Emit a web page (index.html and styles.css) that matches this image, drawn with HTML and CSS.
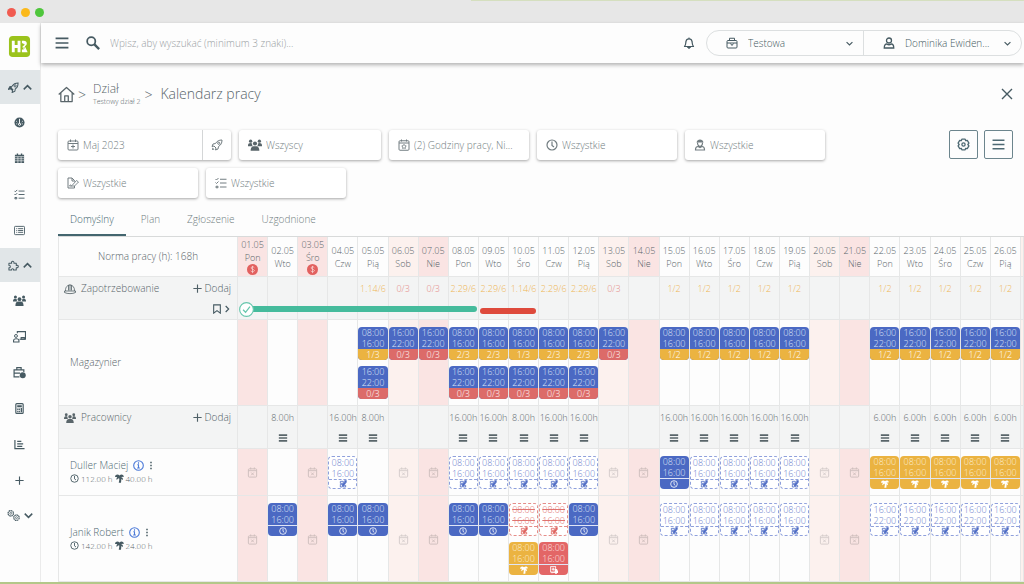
FILE: index.html
```html
<!DOCTYPE html>
<html lang="pl">
<head>
<meta charset="utf-8">
<meta name="viewport" content="width=device-width, initial-scale=1">
<title>Kalendarz pracy</title>
<link rel="stylesheet" href="styles.css">
</head>
<body>
<svg class="sprite" aria-hidden="true">
  <symbol id="i-rocket" viewBox="0 0 24 24"><path d="M22 2c-6 0-10 2-13 7l-5 1-2 5 4-1 4 4-1 4 5-2 1-5c5-3 7-7 7-13z" fill="none" stroke="currentColor" stroke-width="2" stroke-linejoin="round"/><circle cx="15.500" cy="8.500" r="2.200" fill="none" stroke="currentColor" stroke-width="2"/><path d="M3 17l4 4-5 1z" fill="currentColor"/></symbol>
  <symbol id="i-rocket-solid" viewBox="0 0 24 24"><path d="M22 2c-6 0-10 2-13 7l-5 1-3 6 5-1 4 4-1 4 6-3 1-5c5-3 6-7 6-13z" fill="none" stroke="currentColor" stroke-width="2.200"/><path d="M9 9l-5 1-3 6 5-1 4 4 2-3-4-3z" fill="currentColor"/><circle cx="15.500" cy="8.500" r="2.400" fill="none" stroke="currentColor" stroke-width="2"/></symbol>
  <symbol id="i-gauge" viewBox="0 0 24 24"><circle cx="12" cy="12" r="11" fill="currentColor"/><path d="M12 4v11M5 9l2 2M19 9l-2 2M5 15h2M17 15h2" stroke="#fff" stroke-width="2"/><circle cx="12" cy="16" r="3" fill="#fff"/><circle cx="12" cy="16" r="1.300" fill="currentColor"/></symbol>
  <symbol id="i-calendar-grid" viewBox="0 0 24 24"><path d="M2 4h20v18H2zM6 1h3v4H6zM15 1h3v4h-3z" fill="currentColor"/><path d="M2 8h20M2 12.500h20M2 17h20M8.500 8v14M15.500 8v14" stroke="#fff" stroke-width="1.300"/></symbol>
  <symbol id="i-checklist" viewBox="0 0 24 24"><path d="M1 4l2 2 4-4M1 11l2 2 4-4M2 18.500h4v3H2zM10 4.500h13M10 12h13M10 20h13" fill="none" stroke="currentColor" stroke-width="2"/></symbol>
  <symbol id="i-list-card" viewBox="0 0 24 24"><rect x="1" y="3" width="22" height="18" rx="2" fill="none" stroke="currentColor" stroke-width="2"/><path d="M5 8h2M9 8h11M5 12h2M9 12h11M5 16h2M9 16h11" stroke="currentColor" stroke-width="2"/></symbol>
  <symbol id="i-puzzle" viewBox="0 0 24 24"><path d="M2 7h6c-2-5 6-6 5 0h5v5c6-2 6 6 0 5v5h-6c1-4-5-4-4 0H2v-5c4 1 4-6 0-5z" fill="none" stroke="currentColor" stroke-width="2.200" stroke-linejoin="round"/></symbol>
  <symbol id="i-group" viewBox="0 0 24 24"><circle cx="4.500" cy="5.500" r="2.800" fill="currentColor"/><circle cx="19.500" cy="5.500" r="2.800" fill="currentColor"/><circle cx="12" cy="9.500" r="3.500" fill="currentColor"/><path d="M0 13c0-5 5-5 7-3.500 0 2 0 3 1 4.500H0zM24 13c0-5-5-5-7-3.500 0 2 0 3-1 4.500h8zM4.500 22c0-8 4-8 7.500-8s7.500 0 7.500 8z" fill="currentColor"/></symbol>
  <symbol id="i-teacher" viewBox="0 0 24 24"><path d="M8 6V3h15v14H12" fill="none" stroke="currentColor" stroke-width="2"/><circle cx="5.500" cy="11" r="2.700" fill="none" stroke="currentColor" stroke-width="1.800"/><path d="M1 22v-2c0-5 10-5 10 0v2zM15 17h6v-3h-6z" fill="none" stroke="currentColor" stroke-width="2"/></symbol>
  <symbol id="i-case-clock" viewBox="0 0 24 24"><path d="M12 20H2V7h18v4M7 7V3h8v4M2 13h11" fill="none" stroke="currentColor" stroke-width="2.200"/><circle cx="18" cy="17" r="5.500" fill="currentColor"/></symbol>
  <symbol id="i-calculator" viewBox="0 0 24 24"><rect x="4" y="1.500" width="16" height="21" rx="2" fill="none" stroke="currentColor" stroke-width="2.600"/><path d="M7 5h10v4H7zM7 12h3v3H7zM7 17h3v3H7zM11 12h2v3h-2zM11 17h2v3h-2zM14.500 11h3v9h-3z" fill="currentColor"/></symbol>
  <symbol id="i-chart" viewBox="0 0 24 24"><path d="M2 2v19h21M7 5h9M7 10.500h13M7 16h11" fill="none" stroke="currentColor" stroke-width="2.600"/></symbol>
  <symbol id="i-plus" viewBox="0 0 24 24"><path d="M12 1v22M1 12h22" stroke="currentColor" stroke-width="3"/></symbol>
  <symbol id="i-cogs" viewBox="0 0 24 24"><circle cx="7" cy="8" r="5" fill="none" stroke="currentColor" stroke-width="2.200" stroke-dasharray="3 .8"/><circle cx="7" cy="8" r="1.800" fill="none" stroke="currentColor" stroke-width="1.300"/><circle cx="17.500" cy="16" r="5" fill="none" stroke="currentColor" stroke-width="2.200" stroke-dasharray="3 .8"/><circle cx="17.500" cy="16" r="1.800" fill="none" stroke="currentColor" stroke-width="1.300"/></symbol>
  <symbol id="i-up" viewBox="0 0 24 24"><path d="M2 17l10-10 10 10" fill="none" stroke="currentColor" stroke-width="4"/></symbol>
  <symbol id="i-down" viewBox="0 0 24 24"><path d="M2 7l10 10L22 7" fill="none" stroke="currentColor" stroke-width="4"/></symbol>
  <symbol id="i-right" viewBox="0 0 24 24"><path d="M8 3l9 9-9 9" fill="none" stroke="currentColor" stroke-width="3.500"/></symbol>
  <symbol id="i-burger" viewBox="0 0 24 24"><path d="M1 4h22M1 12h22M1 20h22" stroke="currentColor" stroke-width="2.800"/></symbol>
  <symbol id="i-menu-bold" viewBox="0 0 24 24"><path d="M2 5h20M2 12h20M2 19h20" stroke="currentColor" stroke-width="4"/></symbol>
  <symbol id="i-search" viewBox="0 0 24 24"><circle cx="9" cy="9" r="7" fill="none" stroke="currentColor" stroke-width="3"/><path d="M14 14l8.500 8.500" stroke="currentColor" stroke-width="4"/></symbol>
  <symbol id="i-bell" viewBox="0 0 24 24"><path d="M3 19c3-3 2-6 3-10 1-7 11-7 12 0 1 4 0 7 3 10z" fill="none" stroke="currentColor" stroke-width="2.400" stroke-linejoin="round"/><path d="M12 1v3M9 21c1 2 5 2 6 0z" stroke="currentColor" stroke-width="2" fill="currentColor"/></symbol>
  <symbol id="i-briefcase" viewBox="0 0 24 24"><rect x="2" y="7" width="20" height="15" rx="2" fill="none" stroke="currentColor" stroke-width="2"/><path d="M7 7V2.500h10V7M2 12h20M9 13l3 4 3-4" fill="none" stroke="currentColor" stroke-width="2"/></symbol>
  <symbol id="i-user" viewBox="0 0 24 24"><circle cx="12" cy="7" r="5" fill="none" stroke="currentColor" stroke-width="2.600"/><path d="M2.500 22c0-7 3-8 5-8 3 2 6 2 9 0 2 0 5 1 5 8z" fill="none" stroke="currentColor" stroke-width="2.600"/></symbol>
  <symbol id="i-worker" viewBox="0 0 24 24"><path d="M5 7c1-8 13-8 14 0z" fill="currentColor"/><path d="M7 7c0 10 10 10 10 0M3 22c0-6 3-7 5-7l4 2 4-2c2 0 5 1 5 7z" fill="none" stroke="currentColor" stroke-width="2.400"/></symbol>
  <symbol id="i-home" viewBox="0 0 24 24"><path d="M1 12L12 2l11 10M4 10v12h16V10M9.500 22v-8h5v8" fill="none" stroke="currentColor" stroke-width="1.800" stroke-linejoin="round"/></symbol>
  <symbol id="i-close" viewBox="0 0 24 24"><path d="M2 2l20 20M22 2L2 22" stroke="currentColor" stroke-width="2.800"/></symbol>
  <symbol id="i-cal-plus" viewBox="0 0 24 24"><rect x="2" y="4" width="20" height="18" rx="2" fill="none" stroke="currentColor" stroke-width="2"/><path d="M2 9h20M7 1v5M17 1v5M12 11v8M8 15h8" stroke="currentColor" stroke-width="2"/></symbol>
  <symbol id="i-cal-star" viewBox="0 0 24 24"><rect x="2" y="3.500" width="20" height="19" rx="2" fill="none" stroke="currentColor" stroke-width="2"/><path d="M2 8h20M7 1v4M17 1v4" stroke="currentColor" stroke-width="2"/><path d="M12 10.500l1.500 2.700 3 .6-2 2.200.3 3-2.800-1.200L9.200 19l.3-3-2-2.200 3-.6z" fill="none" stroke="currentColor" stroke-width="1.600"/></symbol>
  <symbol id="i-cal-x" viewBox="0 0 24 24"><rect x="3" y="4" width="18" height="18" rx="2" fill="none" stroke="currentColor" stroke-width="2"/><path d="M3 8h18M8 1v4M16 1v4M9 12l6 6M15 12l-6 6" stroke="currentColor" stroke-width="2"/></symbol>
  <symbol id="i-clock" viewBox="0 0 24 24"><circle cx="12" cy="12" r="10" fill="none" stroke="currentColor" stroke-width="2.400"/><path d="M12 5v8l4 3" fill="none" stroke="currentColor" stroke-width="2.400"/></symbol>
  <symbol id="i-file-sign" viewBox="0 0 24 24"><path d="M15 9V7l-5-5H2v20h13v-4M10 2v6h5" fill="none" stroke="currentColor" stroke-width="2"/><path d="M5 18c2-5 3 1 5-1l9-10 4 3-8 8h-5z" fill="none" stroke="currentColor" stroke-width="1.800"/></symbol>
  <symbol id="i-gear" viewBox="0 0 24 24"><path d="M9 2h6l1 3 3-.5 3 5-2 2.500 2 2.500-3 5-3-.5-1 3H9l-1-3-3 .5-3-5L4 12 2 9.500l3-5L8 5z" fill="none" stroke="currentColor" stroke-width="2.400" stroke-linejoin="round"/><circle cx="12" cy="12" r="3" fill="none" stroke="currentColor" stroke-width="2.400"/></symbol>
  <symbol id="i-helmet" viewBox="0 0 24 24"><path d="M3 16C2 0 22 0 21 16M9 15V4M15 15V4M12 15V3M1 16h22v3c-6 3-16 3-22 0z" fill="none" stroke="currentColor" stroke-width="1.700"/></symbol>
  <symbol id="i-bookmark" viewBox="0 0 24 24"><path d="M4 2h16v20l-8-6-8 6z" fill="none" stroke="currentColor" stroke-width="2.600"/></symbol>
  <symbol id="i-info" viewBox="0 0 24 24"><circle cx="12" cy="12" r="10.500" fill="none" stroke="currentColor" stroke-width="2.400"/><path d="M12 5v3M9.500 10.500H12V17M9 17.500h6" fill="none" stroke="currentColor" stroke-width="2.400"/></symbol>
  <symbol id="i-dots" viewBox="0 0 8 24"><path d="M2 2h4v4H2zM2 10h4v4H2zM2 18h4v4H2z" fill="currentColor"/></symbol>
  <symbol id="i-palm" viewBox="0 0 24 24"><path d="M0 8C1 1 8 0 12 4c4-4 10-3 12 3l-8 1c4 1 6 4 5 8l-4-3-1 10h-6c1-5 2-9 1-12-3 0-4 2-6 5-2-3-1-5 1-8z" fill="currentColor"/></symbol>
  <symbol id="i-plan" viewBox="0 0 24 24"><path d="M4 4h9v6H4zM4 13h6v8H4zM13 16h7v5h-7z" fill="none" stroke="currentColor" stroke-width="2.400"/><path d="M9 17l1-4 7-7 4 4-7 7zM16 1h7v7h-7z" fill="currentColor"/></symbol>
  <symbol id="i-medical" viewBox="0 0 24 24"><rect x="2" y="2" width="15" height="16" fill="none" stroke="currentColor" stroke-width="2.600"/><path d="M9.500 5v9M5 9.500h9" stroke="currentColor" stroke-width="3"/><path d="M14 9h7l3 7v5h-3a3 3 0 0 1-6 0H8a3 3 0 0 1-5-2h11z" fill="currentColor"/></symbol>
  <symbol id="i-money" viewBox="0 0 24 24"><circle cx="12" cy="12" r="12" fill="currentColor"/><path d="M16 8c-2-3-8-2-7 1s6 2 7 5-5 4-8 1M12 4v16" fill="none" stroke="#fae4e3" stroke-width="1.400"/></symbol>
  <symbol id="i-check" viewBox="0 0 24 24"><circle cx="12" cy="12" r="11" fill="#fff" stroke="currentColor" stroke-width="1.800"/><path d="M6.500 12.500l4 4 7-9" fill="none" stroke="currentColor" stroke-width="2"/></symbol>
  <symbol id="i-logo" viewBox="0 0 24 24"><rect x="1" y="1" width="22" height="22" rx="4" fill="#9bc31c"/><path d="M5.500 6v12M11.500 6v12M6 12h5" stroke="#fff" stroke-width="3" fill="none"/><path d="M14.500 6h2c4 0 4 5 1 5.500l3 6.500h-6v-3h2l-2-3.500z" fill="#fff"/><path d="M14.500 9l2.500 1-2.500 2zM16 13.500h1.500" stroke="#9bc31c" stroke-width="1" fill="#9bc31c"/></symbol>
</svg>

<div class="window">
  <div class="titlebar"><i class="dot dot-close"></i><i class="dot dot-min"></i><i class="dot dot-max"></i></div>
  <div class="app">
    <nav class="sidebar" aria-label="Menu">
      <a class="logo" href="#" aria-label="Start"><svg><use href="#i-logo"/></svg></a>
      <a class="side-group active" href="#" aria-label="Szybki start"><svg><use href="#i-rocket-solid"/></svg><svg class="chev"><use href="#i-up"/></svg></a>
      <a class="side-item" href="#" aria-label="Pulpit"><svg><use href="#i-gauge"/></svg></a>
      <a class="side-item" href="#" aria-label="Kalendarz"><svg><use href="#i-calendar-grid"/></svg></a>
      <a class="side-item" href="#" aria-label="Zadania"><svg><use href="#i-checklist"/></svg></a>
      <a class="side-item" href="#" aria-label="Lista"><svg><use href="#i-list-card"/></svg></a>
      <a class="side-group active" href="#" aria-label="Moduły"><svg><use href="#i-puzzle"/></svg><svg class="chev"><use href="#i-up"/></svg></a>
      <a class="side-item" href="#" aria-label="Pracownicy"><svg class="wide"><use href="#i-group"/></svg></a>
      <a class="side-item" href="#" aria-label="Szkolenia"><svg class="wide"><use href="#i-teacher"/></svg></a>
      <a class="side-item" href="#" aria-label="Czas pracy"><svg class="wide"><use href="#i-case-clock"/></svg></a>
      <a class="side-item" href="#" aria-label="Kalkulator"><svg><use href="#i-calculator"/></svg></a>
      <a class="side-item" href="#" aria-label="Raporty"><svg><use href="#i-chart"/></svg></a>
      <a class="side-item" href="#" aria-label="Dodaj moduł"><svg class="small"><use href="#i-plus"/></svg></a>
      <a class="side-group" href="#" aria-label="Ustawienia"><svg class="wide"><use href="#i-cogs"/></svg><svg class="chev"><use href="#i-down"/></svg></a>
    </nav>

    <div class="page">
      <header class="topbar">
        <button class="icon-btn" aria-label="Menu"><svg class="i14"><use href="#i-burger"/></svg></button>
        <label class="search"><svg class="i14"><use href="#i-search"/></svg><input type="search" aria-label="Szukaj" placeholder="Wpisz, aby wyszukać (minimum 3 znaki)..."></label>
        <button class="icon-btn" aria-label="Powiadomienia"><svg class="i12"><use href="#i-bell"/></svg></button>
        <div class="account">
          <label class="account-part"><svg class="i12"><use href="#i-briefcase"/></svg><select aria-label="Firma"><option>Testowa</option></select><svg class="caret"><use href="#i-down"/></svg></label>
          <label class="account-part user"><svg class="i12"><use href="#i-user"/></svg><select aria-label="Użytkownik"><option>Dominika Ewiden...</option></select><svg class="caret"><use href="#i-down"/></svg></label>
        </div>
      </header>

      <main class="content">
        <div class="crumbs">
          <a class="home" href="#" aria-label="Strona główna"><svg><use href="#i-home"/></svg></a>
          <span class="sep">&gt;</span>
          <a class="dept" href="#"><span>Dział</span><small>Testowy dział 2</small></a>
          <span class="sep">&gt;</span>
          <h1>Kalendarz pracy</h1>
          <button class="icon-btn close" aria-label="Zamknij"><svg class="i12"><use href="#i-close"/></svg></button>
        </div>

        <div class="tools">
          <div class="filters">
            <div class="filter month">
              <label><svg><use href="#i-cal-plus"/></svg><select aria-label="Miesiąc"><option>Maj 2023</option></select></label>
              <button aria-label="Bieżący miesiąc"><svg><use href="#i-rocket"/></svg></button>
            </div>
            <label class="filter people"><svg><use href="#i-group"/></svg><select aria-label="Pracownicy"><option>Wszyscy</option></select></label>
            <label class="filter"><svg><use href="#i-cal-star"/></svg><select aria-label="Typ wpisu"><option>(2) Godziny pracy, Ni...</option></select></label>
            <label class="filter"><svg><use href="#i-clock"/></svg><select aria-label="Zmiany"><option>Wszystkie</option></select></label>
            <label class="filter"><svg><use href="#i-worker"/></svg><select aria-label="Stanowiska"><option>Wszystkie</option></select></label>
            <label class="filter"><svg><use href="#i-file-sign"/></svg><select aria-label="Umowy"><option>Wszystkie</option></select></label>
            <label class="filter"><svg><use href="#i-checklist"/></svg><select aria-label="Statusy"><option>Wszystkie</option></select></label>
          </div>
          <button class="square" aria-label="Ustawienia"><svg><use href="#i-gear"/></svg></button>
          <button class="square" aria-label="Opcje"><svg class="i12"><use href="#i-burger"/></svg></button>
        </div>

        <div class="tabs" role="tablist">
          <button class="tab selected" role="tab" aria-selected="true">Domyślny</button>
          <button class="tab" role="tab" aria-selected="false">Plan</button>
          <button class="tab" role="tab" aria-selected="false">Zgłoszenie</button>
          <button class="tab" role="tab" aria-selected="false">Uzgodnione</button>
        </div>

        <table class="calendar" id="calendar"></table>
      </main>
    </div>
  </div>
</div>
<script src="calendar.js"></script>
</body>
</html>
```

FILE: styles.css
```css
* { box-sizing: border-box; }

:root {
  --ink: #465a62;
  --text: #59656a;
  --muted: #727d81;
  --line: #e6e7e7;
  --blue: #4b69c3;
  --amber: #ebb341;
  --red: #dc6b69;
  --holiday: #fae4e3;
  --saturday: #fcf1ee;
  --band: #f3f4f4;
}

body {
  margin: 0;
  background: #fdfdfd;
  color: var(--text);
  font: 300 10px/13px "Open Sans", "Noto Sans", sans-serif;
  overflow: hidden;
}

button, input, select { font: inherit; color: inherit; background: none; border: 0; padding: 0; margin: 0; }
select { appearance: none; outline: 0; min-width: 0; }
button { cursor: pointer; }
a { color: inherit; text-decoration: none; }
svg { display: block; flex: none; width: 12px; height: 12px; }

.sprite { position: absolute; width: 0; height: 0; }
.i12 { width: 12px; height: 12px; }
.i14 { width: 14px; height: 14px; }

.window { display: flex; flex-direction: column; min-height: 100vh; border-bottom: 2px solid #b3c789; }

.titlebar {
  display: flex;
  align-items: center;
  gap: 5px;
  height: 23px;
  padding: 1px 7px 0;
  background: linear-gradient(#d5dfbf, #d5dfbf) right top / 54% 1px no-repeat #e7e7e7;
}
.dot { width: 9px; height: 9px; border-radius: 50%; }
.dot-close { background: #f15b50; }
.dot-min { background: #fbb91b; }
.dot-max { background: #4fc63c; }

.app { display: flex; flex: 1; }

.sidebar { flex: none; width: 41px; border-right: 1px solid #ebebeb; color: var(--ink); }
.logo { display: flex; justify-content: center; align-items: center; height: 47px; padding-right: 2px; }
.logo svg { width: 23px; height: 23px; }
.side-item { display: flex; justify-content: center; align-items: center; height: 36px; padding-right: 1px; }
.side-group { display: flex; justify-content: center; align-items: center; gap: 4px; height: 34px; }
.side-group.active { background: #e1e6e8; }
.side-item svg, .side-group svg { width: 11px; height: 11px; }
.sidebar .wide { width: 13px; height: 13px; }
.sidebar .small { width: 9px; height: 9px; }
.sidebar .chev { width: 9px; height: 9px; }

.page { flex: 1; min-width: 0; }

.topbar {
  display: flex;
  align-items: center;
  height: 40px;
  padding: 0 2px 0 14px;
  color: var(--ink);
  font-size: 10px;
  box-shadow: 0 2px 4px rgba(0, 0, 0, .3);
}
.search { display: flex; align-items: center; gap: 10px; flex: 1; margin-left: 17px; }
.search input { flex: 1; outline: 0; font-size: 10px; }
.search input::placeholder { color: #9aa1a4; opacity: 1; }
.account { display: flex; height: 26px; margin-left: 11px; border: 1px solid #dcdfe0; border-radius: 13px; }
.account-part { display: flex; align-items: center; width: 156px; padding: 0 10px 0 19px; }
.account-part select { flex: 1; margin-left: 10px; }
.account-part.user { width: 158px; border-left: 1px solid #dcdfe0; }
.caret { width: 7px; height: 7px; }

.content { padding: 0 0 0 17px; }

.crumbs { display: flex; align-items: center; height: 67px; padding: 0 11px 5px 0; }
.home svg { width: 17px; height: 17px; }
.sep { padding: 0 7px 0 3px; font-size: 14px; }
.dept { display: flex; flex-direction: column; font-size: 12px; line-height: 14px; }
.dept small { font-size: 7px; line-height: 11px; }
.dept + .sep { padding: 0 8px 0 4px; }
.crumbs h1 { margin: 0; font-size: 14px; font-weight: 300; line-height: 20px; }
.close { margin-left: auto; color: var(--ink); }

.tools { display: flex; align-items: flex-start; gap: 6px; padding-right: 11px; }
.filters { display: flex; flex-wrap: wrap; gap: 8px; flex: 1; color: var(--muted); }
.filter {
  display: flex;
  align-items: center;
  gap: 4px;
  width: 140px;
  height: 30px;
  padding: 0 9px;
  border-radius: 3px;
  background: #fff;
  box-shadow: 0 1px 3px rgba(0, 0, 0, .35);
}
.filter select { flex: 1; }
.filter.people { width: 142px; }
.people svg { width: 14px; height: 14px; color: var(--text); }
.filter.month { width: 173px; padding: 0; gap: 0; }
.month label { display: flex; align-items: center; gap: 4px; flex: 1; padding: 0 9px; }
.month button { display: flex; align-items: center; justify-content: center; width: 29px; height: 30px; border-left: 1px solid #d4d6d7; }
.square {
  display: flex;
  align-items: center;
  justify-content: center;
  width: 29px;
  height: 29px;
  border: 1px solid #6c858d;
  border-radius: 2px;
  color: #4d6973;
}
.square svg { width: 13px; height: 13px; }

.tabs { display: flex; gap: 3px; height: 31px; margin-top: 7px; color: var(--muted); }
.tab { padding: 0 12px; border-bottom: 2px solid transparent; }
.tab.selected { border-color: #44666f; color: #44666f; }

.calendar { width: 100%; table-layout: fixed; border-collapse: separate; border-spacing: 0; border-left: 1px solid var(--line); border-top: 1px solid #d8dada; }
.col-label { width: 179px; }
.col-edge { width: 3px; }
.calendar th, .calendar td {
  padding: 0;
  border-right: 1px solid var(--line);
  border-bottom: 1px solid var(--line);
  font-weight: 300;
  font-size: 9px;
  text-align: center;
  white-space: nowrap;
}
.calendar .holiday { background: var(--holiday); }
.calendar .saturday { background: var(--saturday); }
.calendar .lead { font-size: 10px; }

.head th { height: 40px; line-height: 13px; }
.head svg { width: 11px; height: 11px; margin: 0 auto 1px; color: #e2605e; }

.band th, .band td { height: 43px; background: var(--band); vertical-align: top; line-height: 13px; }
.band td { position: relative; padding-top: 5px; }
.band .lead { padding: 5px 6px 0 5px; }
.band-line { display: flex; align-items: center; height: 13px; }
.band-line .title { margin-left: 5px; margin-right: auto; }
.band-line button { display: flex; align-items: center; gap: 3px; color: #4f6067; }
.band-line .plus { width: 9px; height: 9px; }
.band-tools { display: flex; justify-content: flex-end; align-items: center; gap: 1px; margin-top: 9px; color: var(--ink); }
.band-tools svg { width: 10px; height: 10px; }
.band-tools .arrow { width: 8px; }
.low { color: #efb655; }
.none { color: #e58885; }
.hours-menu { display: block; margin: 9px auto 0; }
.hours-menu svg { width: 10px; height: 10px; }

.bar { position: absolute; z-index: 1; height: 6px; border-radius: 3px; }
.bar.done { top: 29px; left: 9px; width: calc(800% - 3px); background: #45bb9c; }
.bar.late { top: 31px; left: 1px; width: calc(200% - 2px); background: #de4a3c; }
.bar svg { position: absolute; top: -4px; left: -8px; width: 15px; height: 15px; color: #66c7ad; }

.body-row td { padding: 7px 0 6px; vertical-align: top; }
.body-row .lead { text-align: left; padding: 0 0 0 11px; vertical-align: middle; }
.body-row .off { vertical-align: middle; }
.off svg { width: 11px; height: 11px; margin: 0 auto; color: #cdbcbb; }
.saturday.off svg { color: #d2cbc9; }

.chip { height: 33px; border-radius: 4px; overflow: hidden; color: #dfe5f6; line-height: 11px; text-align: center; }
.chip + .chip { margin-top: 6px; }
.chip time { display: block; height: 11px; }
.chip footer { height: 11px; color: #fff; line-height: 11px; }
.chip svg { width: 8px; height: 8px; margin: 1px auto 0; }
.shift, .work { background: var(--blue); }
.shift .part { background: var(--amber); }
.shift .empty { background: var(--red); }
.leave { background: var(--amber); color: #fbeed3; }
.sick { background: #e36666; color: #fbe0e0; }
.work footer, .leave footer, .sick footer { border-top: 1px solid #dfe5f6; }
.plan, .dropped { border: 1px dashed #8fa0dc; background: #fff; color: #6c80cc; }
.plan footer, .dropped footer { height: 9px; border-top: 1px dashed #8fa0dc; color: var(--blue); }
.plan svg, .dropped svg { margin-top: 0; }
.dropped { border-color: #e58d89; color: #df7470; text-decoration: line-through; }
.dropped footer { border-color: #e58d89; color: #dd5f5b; }

.person { display: flex; align-items: center; gap: 5px; color: #4f6a72; }
.person .info { color: #4b79d8; }
.person svg { width: 11px; height: 11px; }
.person .dots { width: 4px; height: 9px; color: var(--ink); }
.person-hours { display: flex; align-items: center; gap: 2px; font-size: 8px; line-height: 13px; color: var(--text); }
.person-hours svg { width: 9px; height: 9px; color: var(--ink); }
```

FILE: calendar.js
```js
const DAY_COUNT = 26;
const WEEKDAYS = ["Pon", "Wto", "Śro", "Czw", "Pią", "Sob", "Nie"];
const HOLIDAYS = [1, 3];
const days = Array.from({ length: DAY_COUNT }, (_, i) => i + 1);

const icon = (name, cls = "") => `<svg class="${cls}" aria-hidden="true"><use href="#i-${name}"/></svg>`;
const weekday = d => (d - 1) % 7;
const isFree = d => HOLIDAYS.includes(d) || weekday(d) > 4;
const tone = d => HOLIDAYS.includes(d) || weekday(d) === 6 ? "holiday" : weekday(d) === 5 ? "saturday" : "";

const demand = {
  5: "1.14/6", 6: "0/3", 7: "0/3", 8: "2.29/6", 9: "2.29/6", 10: "1.14/6", 11: "2.29/6", 12: "2.29/6", 13: "0/3",
  15: "1/2", 16: "1/2", 17: "1/2", 18: "1/2", 19: "1/2", 22: "1/2", 23: "1/2", 24: "1/2", 25: "1/2", 26: "1/2"
};

const hours = {
  2: "8.00h", 4: "16.00h", 5: "8.00h", 8: "16.00h", 9: "16.00h", 10: "8.00h", 11: "16.00h", 12: "16.00h",
  15: "16.00h", 16: "16.00h", 17: "16.00h", 18: "16.00h", 19: "16.00h",
  22: "6.00h", 23: "6.00h", 24: "6.00h", 25: "6.00h", 26: "6.00h"
};

const MORNING = ["08:00", "16:00"];
const EVENING = ["16:00", "22:00"];
const chip = (kind, [from, to], footer, footerClass = "") =>
  `<div class="chip ${kind}"><time>${from}</time><time>${to}</time><footer class="${footerClass}">${footer}</footer></div>`;
const shift = (span, fill) => chip("shift", span, fill, fill[0] === "0" ? "empty" : "part");
const work = () => chip("work", MORNING, icon("clock"));
const plan = (span = MORNING) => chip("plan", span, icon("plan"));
const dropped = () => chip("dropped", MORNING, icon("plan"));
const leave = () => chip("leave", MORNING, icon("palm"));
const sick = () => chip("sick", MORNING, icon("medical"));

const fill = (list, make) => Object.fromEntries(list.map(d => [d, make(d)]));

const evening = shift(EVENING, "0/3");
const warehouse = {
  ...fill([5, 10], () => shift(MORNING, "1/3") + evening),
  ...fill([8, 9, 11, 12], () => shift(MORNING, "2/3") + evening),
  ...fill([6, 7, 13], () => evening),
  ...fill([15, 16, 17, 18, 19], () => shift(MORNING, "1/2")),
  ...fill([22, 23, 24, 25, 26], () => shift(EVENING, "1/2"))
};

const people = [
  { name: "Duller Maciej", worked: "112.00 h", leave: "40.00 h", cells: {
    ...fill([4, 8, 9, 10, 11, 12, 16, 17, 18, 19], () => plan()),
    15: work(),
    ...fill([22, 23, 24, 25, 26], leave)
  } },
  { name: "Janik Robert", worked: "142.00 h", leave: "24.00 h", cells: {
    ...fill([2, 4, 5, 8, 9, 12], work),
    10: dropped() + leave(),
    11: dropped() + sick(),
    ...fill([15, 16, 17, 18, 19], () => plan()),
    ...fill([22, 23, 24, 25, 26], () => plan(EVENING))
  } }
];

const headRow = `<tr class="head"><th class="lead">Norma pracy (h): 168h</th>${days.map(d =>
  `<th class="${tone(d)}" scope="col">${String(d).padStart(2, "0")}.05<br>${WEEKDAYS[weekday(d)]}${HOLIDAYS.includes(d) ? icon("money") : ""}</th>`
).join("")}<th class="saturday"></th></tr>`;

const bars = {
  1: `<div class="bar done">${icon("check")}</div>`,
  9: `<div class="bar late"></div>`
};

const demandRow = `<tr class="band"><th class="lead" scope="row">
  <div class="band-line">${icon("helmet")}<span class="title">Zapotrzebowanie</span><button>${icon("plus", "plus")}Dodaj</button></div>
  <div class="band-tools">${icon("bookmark")}${icon("right", "arrow")}</div></th>${days.map(d =>
  `<td class="${(demand[d] || "")[0] === "0" ? "none" : "low"}">${demand[d] || ""}${bars[d] || ""}</td>`
).join("")}<td></td></tr>`;

const warehouseRow = `<tr class="body-row"><th class="lead" scope="row">Magazynier</th>${days.map(d =>
  `<td class="${tone(d)}">${warehouse[d] || ""}</td>`).join("")}<td class="saturday"></td></tr>`;

const staffRow = `<tr class="band"><th class="lead" scope="row">
  <div class="band-line">${icon("group")}<span class="title">Pracownicy</span><button>${icon("plus", "plus")}Dodaj</button></div></th>${days.map(d =>
  `<td>${hours[d] ? `${hours[d]}<button class="hours-menu" aria-label="Godziny">${icon("menu-bold")}</button>` : ""}</td>`
).join("")}<td></td></tr>`;

const personRow = p => `<tr class="body-row"><th class="lead" scope="row">
  <div class="person"><a href="#">${p.name}</a>${icon("info", "info")}${icon("dots", "dots")}</div>
  <div class="person-hours">${icon("clock")}<span>${p.worked}</span>${icon("palm")}<span>${p.leave}</span></div></th>${days.map(d =>
  `<td class="${tone(d)}${isFree(d) ? " off" : ""}">${p.cells[d] || (isFree(d) ? icon("cal-x") : "")}</td>`
).join("")}<td class="saturday"></td></tr>`;

document.getElementById("calendar").innerHTML = `
  <colgroup><col class="col-label"><col span="${DAY_COUNT}"><col class="col-edge"></colgroup>
  <thead>${headRow}</thead>
  <tbody>${demandRow}${warehouseRow}${staffRow}${people.map(personRow).join("")}</tbody>`;
```
